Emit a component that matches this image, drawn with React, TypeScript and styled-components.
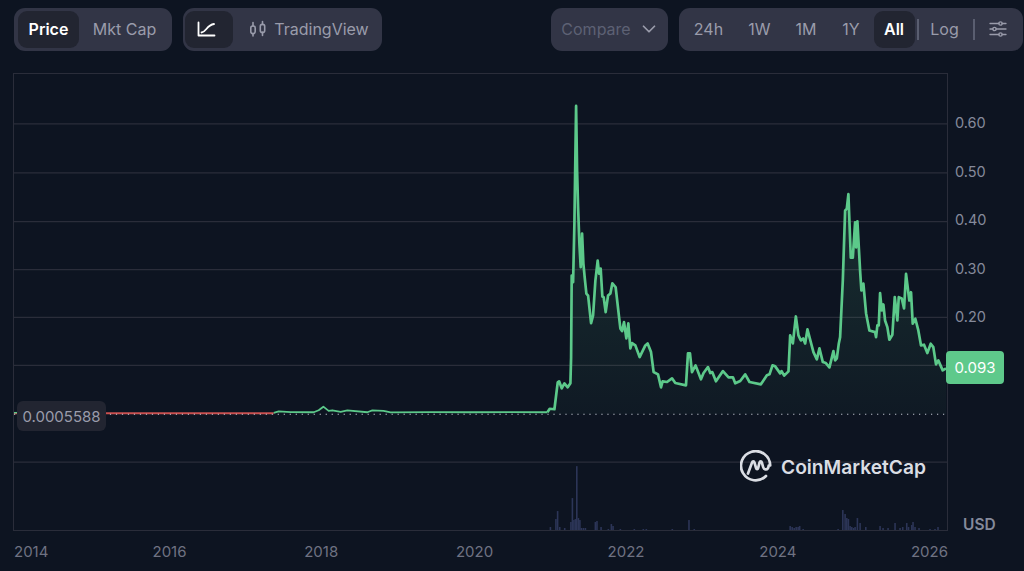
import React from 'react'
import { ChevronDown } from 'lucide-react'
import styled, { createGlobalStyle } from 'styled-components'

const GlobalStyle = createGlobalStyle`
  html, body {
    margin: 0;
    padding: 0;
    background: #0d1421;
    font-family: Inter, 'Liberation Sans', sans-serif;
  }
`

// traced from the price history, in page pixels
const FLAT: number[][] = [
  [273, 412.6], [278, 411.2], [290, 411.8], [313, 412], [318, 410], [322.7, 406.4], [328, 410.6], [331.7, 410], [340, 411.6],
  [346.7, 410.2], [366.7, 412], [371.7, 410.2], [383, 410.6], [390, 412.2], [430, 411.8], [470, 412], [510, 411.8], [547, 412]
]
const RALLY: number[][] = [
  [547, 412], [549.3, 408.5], [554, 409], [557.3, 382], [558.7, 381], [561.3, 388], [564, 383], [567.3, 387], [570, 383], [570.7, 357],
  [571.3, 275], [572.7, 281.7], [574, 223], [575.7, 105], [576.7, 170], [577.7, 206.7], [579, 243], [580.3, 266.7], [581.7, 233],
  [583, 263], [584.3, 276.7], [586, 293], [587.7, 295], [590.7, 322.7], [592.7, 315], [595, 280], [597.3, 260], [598.7, 273],
  [600.3, 268], [602, 296], [603.3, 296.7], [605.3, 311.7], [607.7, 295], [610, 293], [612, 282.7], [615.3, 286.7], [620, 328],
  [621.7, 330.7], [623.7, 321.7], [626, 338], [628, 323], [630, 348], [631.7, 342.7], [635, 345], [639.3, 356.7], [645, 345],
  [647.3, 343], [650.7, 351.7], [653.3, 371.7], [657.7, 374], [660.7, 387], [662.3, 381], [666.7, 381.7], [671.7, 378],
  [675, 382.7], [685.7, 385], [687.7, 353], [689.7, 353], [691.7, 371.7], [695.3, 365], [700.7, 379], [703.3, 372.7],
  [707.7, 366.7], [710, 372.7], [712, 371.7], [715.7, 381], [722.7, 370.7], [728.3, 377], [732.7, 377], [735, 383], [740, 380.7]
]
const SECOND: number[][] = [
  [745, 374], [749.3, 381.7], [760.7, 384], [766.7, 375], [769.3, 374], [772.3, 365], [775, 366], [780, 373], [781.3, 370.7],
  [784, 375.3], [788.3, 371], [790, 335], [792.7, 343], [795.7, 316], [798.3, 335], [800.7, 340], [803, 338], [805, 343],
  [807.3, 329], [813.3, 351.7], [816.7, 359], [819.3, 348], [822.7, 361.7], [825.7, 362.7], [829.3, 367], [833.3, 350.7],
  [835, 360], [836.7, 358], [838.7, 343], [840, 336.7], [842.7, 280], [845, 210], [846.7, 208], [848.3, 193.3], [850.7, 257],
  [852.7, 257], [855, 221.7], [856, 246.7], [857.3, 220.7], [860, 270], [861.3, 290], [863.3, 283], [866, 313], [869.3, 330],
  [875, 331.7], [876, 336.7], [877.3, 325], [878.7, 325], [880, 292.7], [881.7, 310], [883.3, 304], [885, 320], [887.3, 326.7],
  [889.3, 339.3], [892.3, 334.3], [894.7, 296.7], [897.3, 320], [898.7, 296.7], [901.7, 298], [904, 308], [906, 273.3],
  [909.3, 300], [911, 291.7], [912.7, 323.3], [915.3, 318.3], [918.3, 330], [921, 345], [924, 344.3], [927.3, 352.7],
  [930.7, 343.3], [933.3, 346.7], [936, 364], [938.3, 360], [942.7, 370], [946, 368]
]
const toPoints = (pts: number[][]) => pts.map((p) => p.join(',')).join(' ')
const flatPath = toPoints(FLAT)
const movePath = toPoints([...RALLY, ...SECOND])
const areaPath = `${movePath} 946,414 547,414`

// [x, top] of each volume bar, baseline is y=530
const VOLUME: number[][] = [
  [550, 527], [555.5, 519], [557.2, 511], [559.3, 527], [564.3, 528], [570.5, 522], [572, 498], [573.5, 520], [575, 519],
  [576.4, 466], [578, 518], [579.5, 520], [581, 528], [583, 528], [585, 528], [595, 522], [596.6, 521], [600.7, 527], [608, 529],
  [611, 524], [612.7, 526], [620, 529], [634, 529], [643, 529], [646, 529], [672, 529], [688.7, 520], [694, 529], [790, 526],
  [792, 527], [794, 528], [796, 527], [798, 527], [799.5, 526], [803, 529], [838, 529], [842.7, 510], [845, 514], [846.7, 518],
  [848.3, 519], [850, 526], [851.7, 527], [853.5, 528], [855, 527], [857.3, 518], [860, 523], [865.7, 527], [880, 526],
  [883, 528], [888, 528], [895, 523], [900, 528], [902.7, 527], [906.7, 523], [908.5, 527], [911.7, 525], [913, 522], [915, 527],
  [919, 528], [930, 529], [935, 529], [938, 527]
]

const GRID_Y = [123, 172, 221, 269, 317, 365, 462]
const Y_LABELS = ['0.60', '0.50', '0.40', '0.30', '0.20']
const YEARS = ['2014', '2016', '2018', '2020', '2022', '2024', '2026']
const RANGES = [
  { label: '24h', width: 54 },
  { label: '1W', width: 48 },
  { label: '1M', width: 45 },
  { label: '1Y', width: 45 },
  { label: 'All', width: 41 }
]

const LineIcon = () => (
  <svg width="19" height="16" viewBox="0 0 19 16" fill="none" stroke="currentColor" strokeWidth="1.8" strokeLinecap="round" strokeLinejoin="round">
    <path d="M1.5 1.5v13h16" />
    <path d="M4.5 11.5c5-.5 5-7.5 12.5-8.5" />
  </svg>
)

const CandleIcon = () => (
  <svg width="18" height="18" viewBox="0 0 18 18" fill="none" stroke="currentColor" strokeWidth="1.6" strokeLinecap="round">
    <rect x="1.8" y="6" width="4.4" height="7.6" rx="2" />
    <path d="M4 2.5V6M4 13.6V16" />
    <rect x="11.3" y="4.4" width="4.4" height="8" rx="2" />
    <path d="M13.5 1.5v2.9M13.5 12.4V15.5" />
  </svg>
)

const SlidersIcon = () => (
  <svg width="18" height="16" viewBox="0 0 18 16" fill="none" stroke="currentColor" strokeWidth="1.3" strokeLinecap="round">
    <path d="M1 2.5h9M13 2.5h4M1 8h3M7 8h10M1 13.5h9M13 13.5h4" />
    <circle cx="11.5" cy="2.5" r="1.7" />
    <circle cx="5.5" cy="8" r="1.7" />
    <circle cx="11.5" cy="13.5" r="1.7" />
  </svg>
)

const CmcMark = () => (
  <svg width="33" height="33" viewBox="0 0 33 33" fill="none" stroke="currentColor" strokeWidth="2.7" strokeLinecap="round" strokeLinejoin="round">
    <path d="M26 26A14.6 14.6 0 1 1 30.2 15.5" />
    <path d="M8 23.5 12 12.6c.6-1.7 2-1.7 2.5 0l1.5 5.2c.5 1.7 1.7 1.7 2.2 0l1.3-5.2c.5-1.7 1.9-1.7 2.4 0l1.2 4.4c.8 2.7 3.5 3 4.7 1.4.5-.7.8-1.6.9-2.9" />
  </svg>
)

const App = () => (
  <Page>
    <GlobalStyle />
    <Toolbar>
      <Group>
        <Pill $left={4} $right={2}>
          <Tab $active $width={61}>Price</Tab>
          <Tab $width={91}>Mkt Cap</Tab>
        </Pill>
        <Pill $left={2} $right={2}>
          <LineTab $active $width={48}><LineIcon /></LineTab>
          <CandleTab $width={147}><CandleIcon />TradingView</CandleTab>
        </Pill>
      </Group>
      <Group>
        <CompareButton>Compare<ChevronDown size={22} strokeWidth={1.9} /></CompareButton>
        <Pill $left={3} $right={1.5}>
          {RANGES.map((r) => (
            <Tab key={r.label} $active={r.label === 'All'} $width={r.width}>{r.label}</Tab>
          ))}
          <Divider />
          <Tab $width={52}>Log</Tab>
          <Divider />
          <Tab $width={47}><SlidersIcon /></Tab>
        </Pill>
      </Group>
    </Toolbar>

    <ChartRow>
      <Plot>
        <ChartSvg viewBox="13 73 934 457" preserveAspectRatio="none">
          <defs>
            <linearGradient id="priceFill" x1="0" y1="105" x2="0" y2="414" gradientUnits="userSpaceOnUse">
              <stop offset="0" stopColor="#5cc98a" stopOpacity="0.2" />
              <stop offset="1" stopColor="#5cc98a" stopOpacity="0.03" />
            </linearGradient>
          </defs>
          {GRID_Y.map((y) => (
            <line key={y} x1="13" x2="947" y1={y} y2={y} stroke="#2a2d3a" strokeWidth="1.3" />
          ))}
          {VOLUME.map(([x, top]) => (
            <rect key={x} x={x - 0.8} y={top} width="1.6" height={530 - top} fill="#2c3557" />
          ))}
          <polygon points={areaPath} fill="url(#priceFill)" />
          <line x1="13" x2="273" y1="413" y2="413" stroke="#c94f4f" strokeWidth="1.8" />
          <polyline points={flatPath} fill="none" stroke="#5cc98a" strokeWidth="1.8" strokeLinejoin="round" />
          <polyline points={movePath} fill="none" stroke="#5cc98a" strokeWidth="2.7" strokeLinejoin="round" />
          <line x1="13" x2="947" y1="414" y2="414" stroke="#c3c7d2" strokeWidth="1.1" strokeDasharray="1.2 4.8" />
          <line x1="13" x2="16" y1="412.4" y2="412.4" stroke="#5cc98a" strokeWidth="1.4" />
        </ChartSvg>
        <LowBadge>0.0005588</LowBadge>
        <Watermark><CmcMark />CoinMarketCap</Watermark>
        <PriceBadge>0.093</PriceBadge>
      </Plot>
      <YAxis>
        {Y_LABELS.map((l) => (
          <YLabel key={l}>{l}</YLabel>
        ))}
        <Currency>USD</Currency>
      </YAxis>
    </ChartRow>

    <XAxis>
      {YEARS.map((y) => (
        <span key={y}>{y}</span>
      ))}
    </XAxis>
  </Page>
)

const Page = styled.div`
  width: 1024px;
  height: 571px;
  box-sizing: border-box;
  padding-top: 8px;
  overflow: hidden;
  background: #0d1421;
  color: #858a9b;
`

const Toolbar = styled.div`
  display: flex;
  justify-content: space-between;
  height: 43px;
  margin-bottom: 22px;
  padding: 0 1px 0 14px;
`

const Group = styled.div`
  display: flex;
  gap: 11px;
`

const Pill = styled.div<{ $left: number; $right: number }>`
  display: flex;
  align-items: center;
  padding: 0 ${(props) => props.$right}px 0 ${(props) => props.$left}px;
  background: #323546;
  border-radius: 11px;
`

const Tab = styled.div<{ $active?: boolean; $width: number }>`
  display: flex;
  align-items: center;
  justify-content: center;
  gap: 7px;
  flex-shrink: 0;
  box-sizing: border-box;
  width: ${(props) => props.$width}px;
  height: 37px;
  padding-bottom: 1px;
  border-radius: 9px;
  font-size: 16px;
  font-weight: ${(props) => (props.$active ? 600 : 400)};
  color: ${(props) => (props.$active ? '#ffffff' : '#9a9cab')};
  background: ${(props) => (props.$active ? '#222531' : 'transparent')};
`

const LineTab = styled(Tab)`
  padding-right: 5px;
`

const CandleTab = styled(Tab)`
  padding-left: 5px;
`

const Divider = styled.div`
  width: 1.5px;
  height: 21px;
  margin-left: 2.5px;
  flex-shrink: 0;
  background: #5a5e70;
`

const CompareButton = styled.div`
  display: flex;
  align-items: center;
  justify-content: center;
  gap: 7px;
  width: 117px;
  box-sizing: border-box;
  padding: 0 0 2px 3px;
  background: #323546;
  border-radius: 11px;
  font-size: 16px;
  color: #5d6174;

  svg {
    color: #9a9cab;
  }
`

const ChartRow = styled.div`
  display: flex;
  height: 458px;
  padding-left: 13px;
`

const Plot = styled.div`
  position: relative;
  box-sizing: border-box;
  width: 935px;
  height: 458px;
  border: 1px solid #2a2d3a;
`

const ChartSvg = styled.svg`
  display: block;
  width: 100%;
  height: 100%;
`

const LowBadge = styled.div`
  position: absolute;
  left: 3px;
  top: 327px;
  display: flex;
  align-items: center;
  justify-content: center;
  width: 89px;
  height: 30px;
  background: #222531;
  border-radius: 6px;
  font-size: 15px;
  color: #9a9cab;
`

const PriceBadge = styled.div`
  position: absolute;
  left: 932px;
  top: 277px;
  display: flex;
  align-items: center;
  justify-content: center;
  width: 58px;
  height: 33px;
  background: #5ec98b;
  border-radius: 4px;
  font-size: 15px;
  color: #ffffff;
`

const Watermark = styled.div`
  position: absolute;
  left: 726px;
  top: 376px;
  display: flex;
  align-items: center;
  gap: 8px;
  font-size: 19.2px;
  font-weight: 600;
  color: #dadde4;
`

const YAxis = styled.div`
  display: flex;
  flex-direction: column;
  flex: 1;
  padding: 40px 0 0 7px;
`

const YLabel = styled.div`
  height: 48.6px;
  line-height: 20px;
  font-size: 14.5px;
  color: #858a9b;
`

const Currency = styled.div`
  margin-top: auto;
  margin-bottom: -3px;
  padding-left: 8px;
  font-size: 15.5px;
  font-weight: 600;
  color: #858a9b;
`

const XAxis = styled.div`
  display: grid;
  grid-template-columns: 138.5px repeat(6, 151.7px);
  padding: 11px 0 0 14px;
  font-size: 15px;
  line-height: 20px;
  color: #6f7282;
`

export default App
